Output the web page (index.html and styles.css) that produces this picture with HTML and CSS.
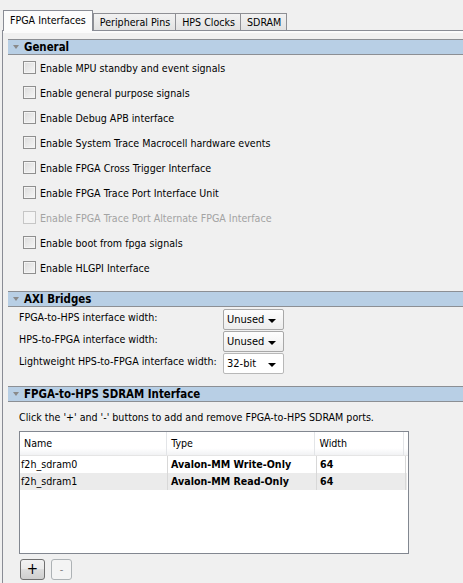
FILE: index.html
```html
<!DOCTYPE html>
<html>
<head>
<meta charset="utf-8">
<link rel="stylesheet" href="styles.css">
</head>
<body>
<div class="tabs">
  <div class="tab active">FPGA Interfaces</div>
  <div class="tab">Peripheral Pins</div>
  <div class="tab">HPS Clocks</div>
  <div class="tab">SDRAM</div>
</div>
<div class="panel">
  <div class="section-head"><span class="tri"></span>General</div>
  <div class="checks">
    <label class="check"><span class="box"></span>Enable MPU standby and event signals</label>
    <label class="check"><span class="box"></span>Enable general purpose signals</label>
    <label class="check"><span class="box"></span>Enable Debug APB interface</label>
    <label class="check"><span class="box"></span>Enable System Trace Macrocell hardware events</label>
    <label class="check"><span class="box"></span>Enable FPGA Cross Trigger Interface</label>
    <label class="check"><span class="box"></span>Enable FPGA Trace Port Interface Unit</label>
    <label class="check disabled"><span class="box"></span>Enable FPGA Trace Port Alternate FPGA Interface</label>
    <label class="check"><span class="box"></span>Enable boot from fpga signals</label>
    <label class="check"><span class="box"></span>Enable HLGPI Interface</label>
  </div>

  <div class="section-head axi-head"><span class="tri"></span>AXI Bridges</div>
  <div class="axi">
    <div class="axi-label">FPGA-to-HPS interface width:</div>
    <div class="select"><span>Unused</span><span class="arrow"></span></div>
    <div class="axi-label">HPS-to-FPGA interface width:</div>
    <div class="select"><span>Unused</span><span class="arrow"></span></div>
    <div class="axi-label">Lightweight HPS-to-FPGA interface width:</div>
    <div class="select white"><span>32-bit</span><span class="arrow"></span></div>
  </div>

  <div class="section-head sdram-head"><span class="tri"></span>FPGA-to-HPS SDRAM Interface</div>
  <div class="hint">Click the '+' and '-' buttons to add and remove FPGA-to-HPS SDRAM ports.</div>
  <div class="table">
    <div class="thead">
      <div class="th c1">Name</div>
      <div class="th c2">Type</div>
      <div class="th c3">Width</div>
      <div class="th c4"></div>
    </div>
    <div class="tr">
      <div class="td c1">f2h_sdram0</div>
      <div class="td c2 b">Avalon-MM Write-Only</div>
      <div class="td c3 b">64</div>
    </div>
    <div class="tr alt">
      <div class="td c1">f2h_sdram1</div>
      <div class="td c2 b">Avalon-MM Read-Only</div>
      <div class="td c3 b">64</div>
    </div>
  </div>
  <div class="buttons">
    <button class="btn plus">+</button>
    <button class="btn minus" disabled>-</button>
  </div>
</div>
</body>
</html>
```
FILE: styles.css
```css
html, body {
  margin: 0;
  padding: 0;
  background: #f0f0f0;
  font-family: "DejaVu Sans Condensed", "Liberation Sans", sans-serif;
  font-size: 10.6px;
  color: #000;
  width: 463px;
  height: 583px;
  overflow: hidden;
}

.tabs {
  display: flex;
  align-items: flex-end;
  height: 30px;
  padding-left: 3px;
  box-sizing: border-box;
}

.tab {
  height: 17px;
  box-sizing: border-box;
  border: 1px solid #8e8f94;
  border-bottom: none;
  background: linear-gradient(#f2f2f2, #e2e2e2);
  padding: 0 5px 0 6px;
  line-height: 17px;
  margin-right: -1px;
  position: relative;
  white-space: nowrap;
}

.tab.active {
  background: #fcfcfc;
  line-height: 18px;
  margin-bottom: -1px;
  height: 21px;
  padding: 0 6px;
  z-index: 1;
  border-color: #898c95;
  margin-right: 0;
}

.panel {
  border-top: 1px solid #898c95;
  border-left: 1px solid #898c95;
  margin-left: 2px;
  box-shadow: inset 0 2px 0 #fbfbfb;
  padding-top: 8px;
  height: 560px;
}

.section-head {
  margin-left: 5px;
  height: 14px;
  line-height: 14px;
  background: #b8cfe5;
  border-top: 1px solid #8c8f94;
  border-bottom: 1px solid #8c8f94;
  font-weight: bold;
  font-size: 11.4px;
  display: flex;
  align-items: center;
  padding-left: 5px;
}

.tri {
  width: 0;
  height: 0;
  border-left: 3px solid transparent;
  border-right: 3px solid transparent;
  border-top: 4px solid #8a8a8a;
  margin-right: 5px;
}

.checks {
  display: flex;
  flex-direction: column;
  padding-left: 20px;
}

.check {
  height: 25px;
  display: flex;
  align-items: center;
  white-space: nowrap;
}

.box {
  width: 13px;
  height: 13px;
  box-sizing: border-box;
  border: 1px solid #8f8f8f;
  background: linear-gradient(135deg, #dcdcdc, #f6f6f6);
  box-shadow: inset 0 0 0 1px #f4f4f4;
  margin-right: 4px;
}

.check.disabled {
  color: #a3a3a3;
}

.check.disabled .box {
  border-color: #c6c6c6;
  background: #f4f4f4;
  box-shadow: none;
}

.axi-head {
  margin-top: 11px;
}

.axi {
  display: grid;
  grid-template-columns: 204px 61px;
  grid-auto-rows: 22px;
  padding-left: 16px;
  margin-top: 1px;
}

.axi-label {
  line-height: 18px;
  white-space: nowrap;
}

.select {
  height: 21px;
  margin-top: 1px;
  box-sizing: border-box;
  border: 1px solid #a8a8a8;
  border-radius: 2px;
  background: linear-gradient(#fdfdfd, #ededed);
  display: flex;
  align-items: center;
  justify-content: space-between;
  padding: 0 7px 0 3px;
  font-size: 11px;
}

.select.white {
  background: #fff;
  border-color: #b8b8b8;
}

.arrow {
  width: 0;
  height: 0;
  border-left: 4px solid transparent;
  border-right: 4px solid transparent;
  border-top: 4px solid #000;
  margin-top: 2px;
}

.sdram-head {
  margin-top: 12px;
}

.hint {
  margin: 8px 0 0 16px;
  line-height: 14px;
  white-space: nowrap;
}

.table {
  margin: 7px 0 0 16px;
  width: 390px;
  height: 123px;
  box-sizing: border-box;
  border: 1px solid #828790;
  background: #fff;
}

.thead {
  display: flex;
  height: 24px;
  background: linear-gradient(#ffffff 0%, #ffffff 70%, #f1f2f4 100%);
  border-bottom: 1px solid #e5e5e5;
  box-sizing: border-box;
}

.th {
  line-height: 23px;
  padding-left: 4px;
  box-sizing: border-box;
  border-right: 1px solid #e3e5e8;
}

.c1 { width: 148px; }
.c2 { width: 149px; }
.c3 { width: 89px; }
.c4 { flex: 1; border-right: none; }

.tr {
  display: flex;
  height: 17px;
  width: 387px;
  background: #fff;
}

.tr.alt {
  background: #ebebeb;
}

.td {
  line-height: 17px;
  box-sizing: border-box;
  border-right: 1px solid #d8d8d8;
  padding-left: 3px;
  white-space: nowrap;
}

.td.c1 { padding-left: 1px; }
.b { font-weight: bold; }

.buttons {
  display: flex;
  gap: 6px;
  margin: 5px 0 0 17px;
}

.btn {
  font-family: inherit;
  padding: 0;
  box-sizing: border-box;
  border-radius: 3px;
  height: 21px;
}

.btn.plus {
  width: 25px;
  border: 1px solid #707070;
  background: linear-gradient(#f2f2f2 0%, #ebebeb 45%, #dddddd 50%, #cfcfcf 100%);
  font-size: 15px;
  line-height: 17px;
  color: #000;
}

.btn.minus {
  width: 21px;
  border: 1px solid #adb2b5;
  background: #f4f4f4;
  color: #838383;
  font-size: 11px;
}
```
